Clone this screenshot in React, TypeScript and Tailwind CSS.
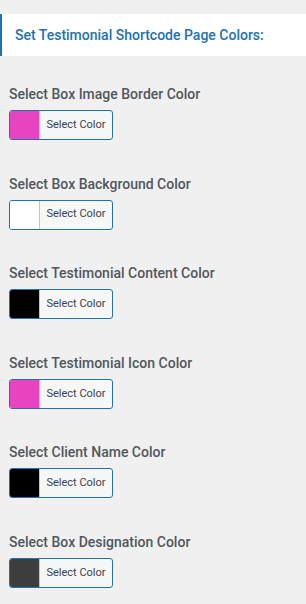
const fields = [
  { label: 'Select Box Image Border Color', color: '#e843c0' },
  { label: 'Select Box Background Color', color: '#ffffff' },
  { label: 'Select Testimonial Content Color', color: '#000000' },
  { label: 'Select Testimonial Icon Color', color: '#e843c0' },
  { label: 'Select Client Name Color', color: '#000000' },
  { label: 'Select Box Designation Color', color: '#3d3d3d' },
]

export default function App() {
  return (
    <div className="min-h-[604px] bg-[#f0f0f1] pt-[14px] font-['Roboto',sans-serif]">
      {/* Titulo */}
      <div className="flex h-[42px] items-center border-l-2 border-[#2271b1] bg-white pl-[13px]">
        <h2 className="text-[14px] font-medium text-[#2271b1]">Set Testimonial Shortcode Page Colors:</h2>
      </div>

      <div className="mt-[28px] flex flex-col gap-[33.6px] px-[9px]">
        {fields.map((f) => (
          <div key={f.label}>
            <label className="block text-[14px] leading-[20px] font-medium text-[#50575e]">{f.label}</label>
            <button
              type="button"
              className="mt-[6px] flex h-[30px] w-[104px] overflow-hidden rounded-[3px] border border-[#2271b1] bg-[#f6f7f7]"
            >
              <span className="h-full w-[30px] border-r border-[#c3c4c7]" style={{ backgroundColor: f.color }}></span>
              <span className="flex flex-1 items-center justify-center text-[11px] text-[#3c434a]">Select Color</span>
            </button>
          </div>
        ))}
      </div>
    </div>
  )
}
